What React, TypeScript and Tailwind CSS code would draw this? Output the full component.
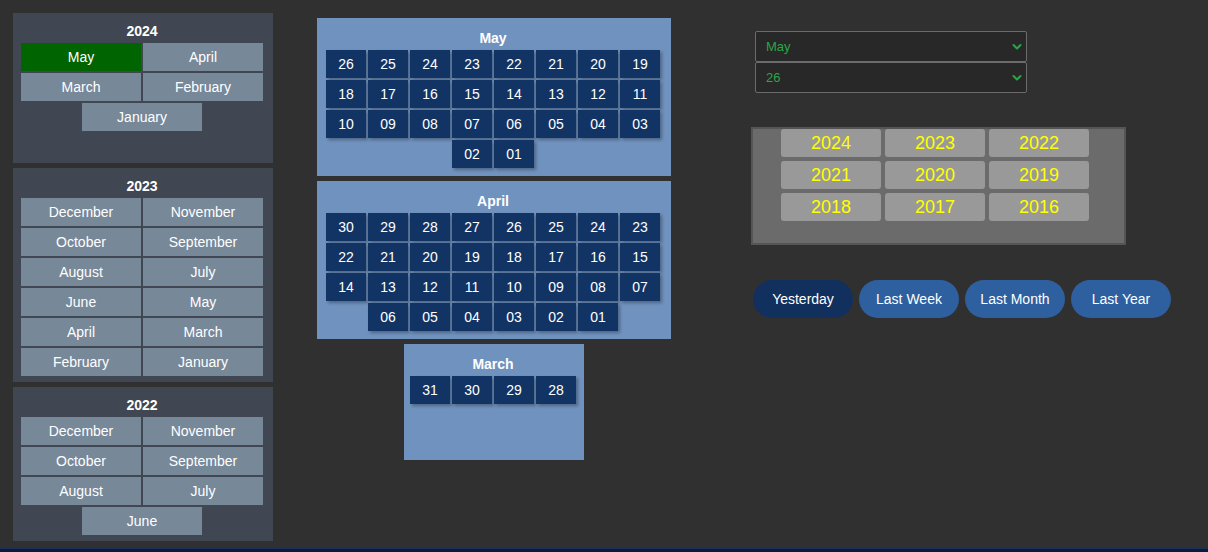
import React from "react";

const font = { fontFamily: '"Liberation Sans", Arial, sans-serif' };

function MonthBtn({ label, active }: { label: string; active?: boolean }) {
  return (
    <div
      className={`w-[120px] h-[28px] flex items-center justify-center text-[14px] text-white ${
        active ? "bg-[#006400]" : "bg-[#778899]"
      }`}
    >
      {label}
    </div>
  );
}

function YearPanel({
  year,
  months,
  active,
  fixedH,
}: {
  year: string;
  months: string[];
  active?: string;
  fixedH?: boolean;
}) {
  return (
    <div className={`bg-[#414752] pl-[8px] pt-[10px] pb-[6px] ${fixedH ? "h-[150px]" : ""}`}>
      <div className="w-[242px] text-center text-[14px] font-bold leading-[16px] text-white mb-[4px]">{year}</div>
      <div className="w-[242px] flex flex-wrap justify-center gap-[2px]">
        {months.map((m) => (
          <MonthBtn key={m} label={m} active={m === active} />
        ))}
      </div>
    </div>
  );
}

function Cell({ n }: { n: string }) {
  return (
    <div className="w-[40px] h-[28px] bg-[#123464] text-white text-[14px] flex items-center justify-center shadow-[2px_2px_3px_rgba(0,0,0,0.3)]">
      {n}
    </div>
  );
}

function DayPanel({
  title,
  days,
  w,
  cw,
  pl,
  h,
}: {
  title: string;
  days: string[];
  w: string;
  cw: string;
  pl: string;
  h?: string;
}) {
  return (
    <div className={`bg-[#7092be] ${w} ${pl} pt-[12px] pb-[8px] ${h ?? ""}`}>
      <div className={`${cw} text-center text-[14px] font-bold leading-[16px] text-white mb-[4px]`}>{title}</div>
      <div className={`${cw} flex flex-wrap justify-center gap-[2px]`}>
        {days.map((d) => (
          <Cell key={d} n={d} />
        ))}
      </div>
    </div>
  );
}

function Chevron() {
  return (
    <svg width="10" height="8" viewBox="0 0 10 8" className="absolute right-[4px] top-1/2 -translate-y-1/2">
      <path d="M1.5 2 L5 5.5 L8.5 2" fill="none" stroke="#28a745" strokeWidth="2" strokeLinecap="round" strokeLinejoin="round" />
    </svg>
  );
}

function Select({ value }: { value: string }) {
  return (
    <div className="relative w-[272px] h-[31px] bg-[#282828] border border-[#6b6b6b] rounded-[2px] flex items-center pl-[10px] text-[13px] text-[#28a745]">
      {value}
      <Chevron />
    </div>
  );
}

const pad = (n: number) => (n < 10 ? "0" + n : String(n));
const range = (from: number, to: number) => {
  const r: string[] = [];
  for (let i = from; i >= to; i--) r.push(pad(i));
  return r;
};

export default function App() {
  return (
    <div style={font} className="w-[1208px] h-[552px] bg-[#303030] flex flex-col overflow-hidden">
      <div className="flex items-start h-[548px]">
        <div className="w-[260px] ml-[13px] mt-[13px] flex flex-col gap-[5px]">
          <YearPanel year="2024" months={["May", "April", "March", "February", "January"]} active="May" fixedH />
          <YearPanel
            year="2023"
            months={[
              "December",
              "November",
              "October",
              "September",
              "August",
              "July",
              "June",
              "May",
              "April",
              "March",
              "February",
              "January",
            ]}
          />
          <YearPanel
            year="2022"
            months={["December", "November", "October", "September", "August", "July", "June"]}
          />
        </div>

        <div className="w-[354px] ml-[44px] mt-[18px] flex flex-col items-center gap-[5px]">
          <DayPanel title="May" days={range(26, 1)} w="w-[354px]" cw="w-[334px]" pl="pl-[9px]" />
          <DayPanel title="April" days={range(30, 1)} w="w-[354px]" cw="w-[334px]" pl="pl-[9px]" />
          <DayPanel title="March" days={range(31, 28)} w="w-[180px]" cw="w-[166px]" pl="pl-[6px]" h="h-[116px]" />
        </div>

        <div className="ml-[80px] mt-[31px] flex flex-col">
          <div className="ml-[4px] flex flex-col">
            <Select value="May" />
            <Select value="26" />
          </div>
          <div className="mt-[34px] w-[375px] h-[118px] bg-[#6b6b6b] border-2 border-[#555555] pl-[28px]">
            <div className="grid grid-cols-[100px_100px_100px] gap-[4px]">
              {["2024", "2023", "2022", "2021", "2020", "2019", "2018", "2017", "2016"].map((y) => (
                <div
                  key={y}
                  className="h-[28px] bg-[#999999] rounded-[3px] flex items-center justify-center text-[18px] text-[#ffff00]"
                >
                  {y}
                </div>
              ))}
            </div>
          </div>
          <div className="mt-[35px] ml-[2px] flex gap-[6px]">
            {["Yesterday", "Last Week", "Last Month", "Last Year"].map((b, i) => (
              <div
                key={b}
                className={`w-[100px] h-[38px] rounded-full flex items-center justify-center text-[14px] text-white ${
                  i === 0 ? "bg-[#12305e]" : "bg-[#2e5f9f]"
                }`}
              >
                {b}
              </div>
            ))}
          </div>
        </div>
      </div>
      <div className="h-[4px] bg-[#0b1a36] border-t border-[#1a3160]" />
    </div>
  );
}
